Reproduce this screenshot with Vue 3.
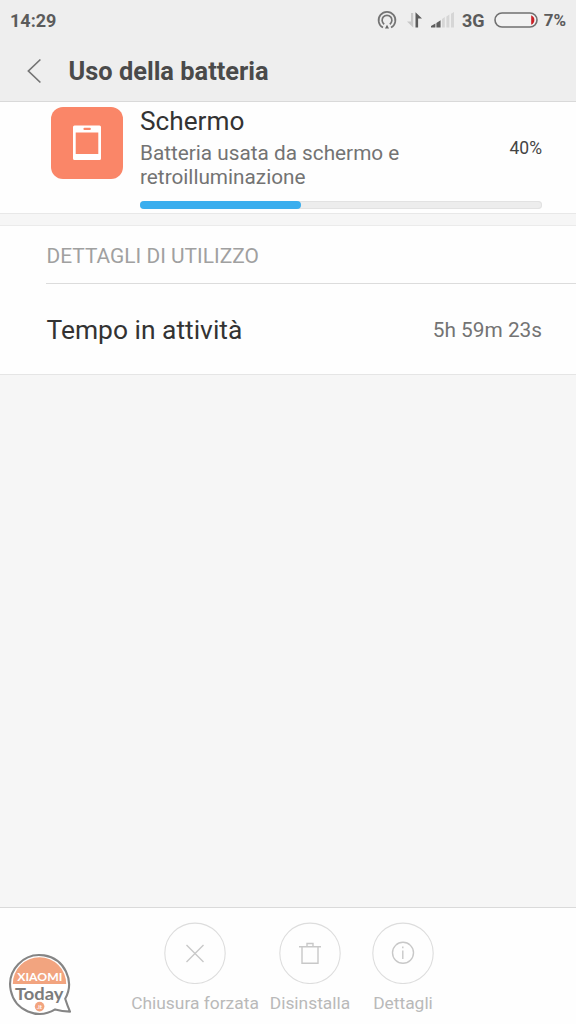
<script setup>
const usagePercent = 40
const title = 'Uso della batteria'
const actions = [
  { id: 'close', label: 'Chiusura forzata' },
  { id: 'trash', label: 'Disinstalla' },
  { id: 'info', label: 'Dettagli' },
]
</script>

<template>
  <div class="screen">
    <header class="top">
      <div class="status">
        <span class="clock">14:29</span>
        <svg class="hotspot" width="20" height="20" viewBox="0 0 20 20" fill="none" stroke="#747474" stroke-width="1.7">
          <path d="M6 17.6A8.4 8.4 0 1 1 14 17.6" />
          <path d="M7.2 14.2A4.9 4.9 0 1 1 12.8 14.2" />
          <path d="M10 14.8L8 18.6H12Z" fill="#686868" stroke="none" />
        </svg>
        <svg class="data" width="18" height="18" viewBox="0 0 18 18">
          <path d="M7.2 2V16.4L1 10.6H5V2Z" fill="#c8c8c8" />
          <path d="M9.5 1.2L16 7.4H12.1V16.4H9.5Z" fill="#5c5c5c" />
        </svg>
        <svg class="signal" width="24" height="16" viewBox="0 0 24 16">
          <path d="M0 15.5V14L4.4 11.4V15.5ZM5.4 15.5V10.9L9.6 8.2V15.5Z" fill="#5e5e5e" />
          <path d="M11 15.5V7L13.8 5V15.5ZM15.4 15.5V4.4L18.4 2.4V15.5ZM20 15.5V1.8L23 0V15.5Z" fill="#d6d6d6" />
        </svg>
        <span class="network">3G</span>
        <svg class="battery" width="44" height="16" viewBox="0 0 44 16">
          <rect x="1" y="1" width="42" height="14" rx="7" fill="#f2f2f2" stroke="#707070" stroke-width="1.6" />
          <path d="M37.2 3.2C39.4 4.2 40.4 6 40.4 8S39.4 11.8 37.2 12.8Z" fill="#c92026" />
        </svg>
        <span class="level">7%</span>
      </div>
      <div class="titlebar">
        <svg class="back" width="16" height="26" viewBox="0 0 16 26" fill="none" stroke="#747474" stroke-width="1.7">
          <path d="M14.4 1.5L2.4 13L14.4 24.5" />
        </svg>
        <h1>{{ title }}</h1>
      </div>
    </header>

    <section class="usage">
      <svg class="appicon" width="72" height="72" viewBox="0 0 72 72">
        <rect width="72" height="72" rx="12" fill="#fa8668" />
        <path fill="#fff" fill-rule="evenodd" d="M23.5 18.5H48.5A1.5 1.5 0 0 1 50 20V51.5A1.5 1.5 0 0 1 48.5 53H23.5A1.5 1.5 0 0 1 22 51.5V20A1.5 1.5 0 0 1 23.5 18.5ZM24.7 25.5V47H47.3V25.5ZM33.5 20.8A1.1 1.1 0 0 0 33.5 23H38.8A1.1 1.1 0 0 0 38.8 20.8Z" />
      </svg>
      <div class="usage-body">
        <div class="usage-text">
          <div>
            <h2>Schermo</h2>
            <p>Batteria usata da schermo e retroilluminazione</p>
          </div>
          <span class="percent">{{ usagePercent }}%</span>
        </div>
        <div class="track"><div class="fill" :style="{ width: usagePercent + '%' }"></div></div>
      </div>
    </section>

    <section class="details">
      <h3>DETTAGLI DI UTILIZZO</h3>
      <div class="row">
        <span class="name">Tempo in attività</span>
        <span class="value">5h 59m 23s</span>
      </div>
    </section>

    <footer class="bar">
      <svg class="logo" width="66" height="66" viewBox="0 0 66 66">
        <path d="M58.2 46.8A29.4 29.4 0 1 0 48.1 57.4Q55 59.3 63 59.6Q60.5 54 58.2 46.8Z" fill="#fff" stroke="#858585" stroke-width="2.1" stroke-linejoin="round" />
        <path d="M5.8 32A26.7 26.7 0 0 1 59.2 32Z" fill="#f2a47f" />
        <text x="10.3" y="29" textLength="45" lengthAdjust="spacingAndGlyphs" class="brand">XIAOMI</text>
        <text x="8" y="48" textLength="48.5" lengthAdjust="spacingAndGlyphs" class="today">Today</text>
        <circle cx="32.6" cy="54.6" r="4.8" fill="#f2a47f" />
        <text x="32.4" y="57" text-anchor="middle" class="it">.it</text>
      </svg>
      <div v-for="action in actions" :key="action.id" class="action" :class="action.id">
        <svg width="62" height="62" viewBox="0 0 62 62" fill="none" stroke="#c8c8c8" stroke-width="1.4">
          <circle cx="31" cy="31.3" r="30.2" stroke="#dddddd" stroke-width="1.1" />
          <path v-if="action.id === 'close'" d="M22.5 23L39.5 40M39.5 23L22.5 40" />
          <g v-else-if="action.id === 'trash'">
            <path d="M20 24.7H42M23 25V41.3H39V25M28 24.5V21.5H34V24.5" />
          </g>
          <g v-else>
            <circle cx="31" cy="30.8" r="10.5" />
            <path d="M30.8 28.5V37M30.8 24.5V26.3" />
          </g>
        </svg>
        <span>{{ action.label }}</span>
      </div>
    </footer>
  </div>
</template>

<style>
body { margin: 0; }
</style>

<style scoped>
.screen {
  width: 576px;
  height: 1024px;
  display: flex;
  flex-direction: column;
  background: #f6f6f6;
  font-family: Roboto, "Noto Sans", sans-serif;
  color: #333;
  overflow: hidden;
}
h1, h2, h3, p { margin: 0; font-weight: 400; }
svg { display: block; flex: none; }
.top {
  height: 102px;
  box-sizing: border-box;
  border-bottom: 1px solid #d9d9d9;
  background: #eeeeee;
}
.status {
  height: 40px;
  display: flex;
  align-items: center;
  padding: 0 10px;
  font-size: 18px;
  font-weight: 700;
  color: #5b5b5b;
  white-space: nowrap;
}
.clock { width: 367px; flex: none; }
.data { margin-left: 9px; }
.signal { margin-left: 7px; }
.network { width: 24px; margin-left: 7px; }
.battery { margin-left: 8px; }
.level { margin-left: 6px; font-size: 17px; }
.titlebar {
  display: flex;
  align-items: center;
  height: 61px;
}
.back { margin-left: 26px; }
h1 {
  margin-left: 26.5px;
  font-size: 25.4px;
  font-weight: 700;
  color: #4a4a4a;
}
.usage {
  height: 112px;
  box-sizing: border-box;
  display: flex;
  padding: 5px 34px 0 51px;
  background: #fefefe;
  border-bottom: 1px solid #e8e8e8;
}
.usage-body { flex: 1; margin-left: 17px; }
.usage-text {
  display: flex;
  align-items: center;
  justify-content: space-between;
  height: 81px;
}
h2 { font-size: 26.2px; line-height: 30px; margin-top: -1px; }
p { width: 300px; font-size: 20.75px; line-height: 24px; margin-top: 5px; color: #737373; }
.percent { font-size: 17.5px; color: #444; }
.track {
  height: 8px;
  box-sizing: border-box;
  margin-top: 13px;
  border-radius: 4px;
  background: #ededed;
  box-shadow: inset 0 0 0 1px #e2e2e2;
}
.fill { height: 8px; border-radius: 4px; background: #3aaeee; }
.details {
  height: 150px;
  box-sizing: border-box;
  margin-top: 11px;
  padding-left: 46px;
  background: #fefefe;
  border-top: 1px solid #ebebeb;
  border-bottom: 1px solid #e5e5e5;
}
h3 {
  height: 58px;
  box-sizing: border-box;
  border-bottom: 1px solid #dcdcdc;
  font-size: 20.9px;
  line-height: 60px;
  text-indent: 0.5px;
  color: #a0a0a0;
}
.row {
  height: 91px;
  display: flex;
  align-items: center;
  justify-content: space-between;
  padding: 0 34px 0 0.5px;
}
.name { font-size: 26.4px; }
.value { font-size: 20.8px; color: #737373; }
.bar {
  height: 117px;
  box-sizing: border-box;
  margin-top: auto;
  display: flex;
  background: #fefefe;
  border-top: 1px solid #dadada;
}
.logo { margin: 44px 0 0 7px; }
.action {
  display: flex;
  flex-direction: column;
  align-items: center;
  padding-top: 14px;
  font-size: 17.4px;
  color: #b9b9b9;
  white-space: nowrap;
}
.action span { margin-top: 9px; line-height: 21px; }
.close { width: 128px; margin-left: 58px; }
.trash { width: 80px; margin-left: 11px; }
.info { width: 62px; margin-left: 22px; }
.brand { font: 700 12px Lato, sans-serif; fill: #fff; }
.today { font: 700 17px Lato, sans-serif; fill: #7c7c7c; }
.it { font: 700 6px Lato, sans-serif; fill: #fff; }
</style>
